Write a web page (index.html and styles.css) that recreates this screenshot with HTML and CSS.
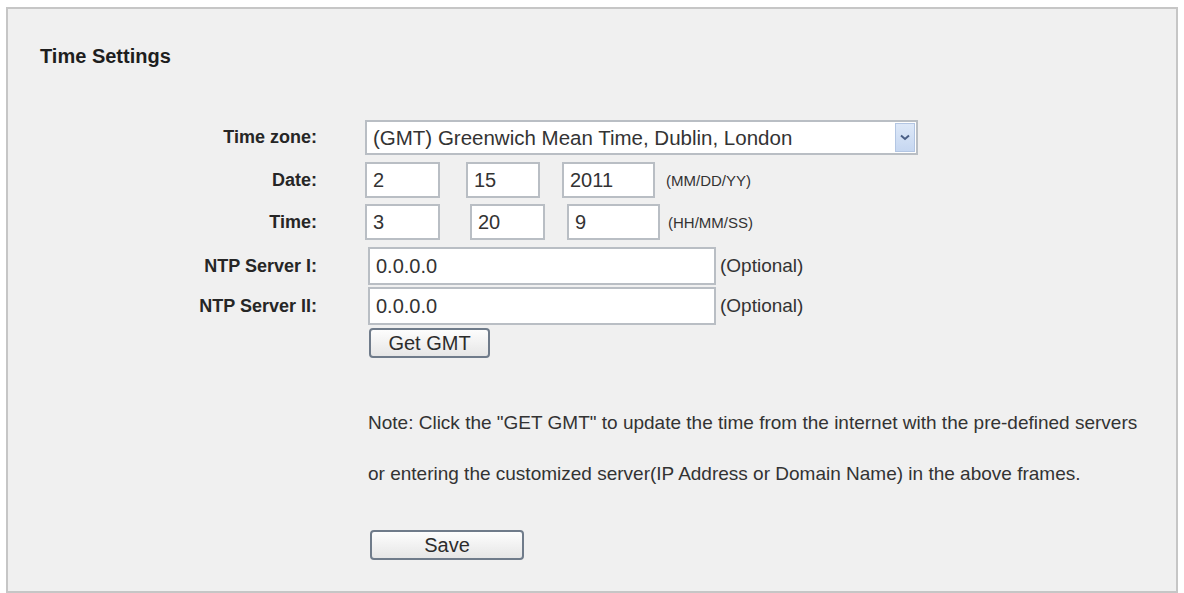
FILE: index.html
```html
<!DOCTYPE html>
<html lang="en">
<head>
  <meta charset="UTF-8" />
  <meta name="viewport" content="width=device-width, initial-scale=1" />
  <link rel="stylesheet" href="styles.css">
</head>
<body>
  <div class="panel">
    <h2 class="title">Time Settings</h2>

    <div class="form">
      <div class="row row-tz">
        <label class="label">Time zone:</label>
        <div class="field">
          <div class="select">
            <span class="select-text">(GMT) Greenwich Mean Time, Dublin, London</span>
            <span class="select-arrow">
              <svg width="10" height="7" viewBox="0 0 10 7"><path d="M1 1.5 L5 5 L9 1.5" fill="none" stroke="#4a5f86" stroke-width="2"/></svg>
            </span>
          </div>
        </div>
      </div>

      <div class="row row-date">
        <label class="label">Date:</label>
        <div class="field">
          <input class="box box-mm" type="text" value="2">
          <input class="box box-dd" type="text" value="15">
          <input class="box box-yy" type="text" value="2011">
          <span class="hint">(MM/DD/YY)</span>
        </div>
      </div>

      <div class="row row-time">
        <label class="label">Time:</label>
        <div class="field">
          <input class="box box-hh" type="text" value="3">
          <input class="box box-mi" type="text" value="20">
          <input class="box box-ss" type="text" value="9">
          <span class="hint">(HH/MM/SS)</span>
        </div>
      </div>

      <div class="row row-ntp1">
        <label class="label">NTP Server I:</label>
        <div class="field">
          <input class="box box-ntp" type="text" value="0.0.0.0">
          <span class="optional">(Optional)</span>
        </div>
      </div>

      <div class="row row-ntp2">
        <label class="label">NTP Server II:</label>
        <div class="field">
          <input class="box box-ntp" type="text" value="0.0.0.0">
          <span class="optional">(Optional)</span>
        </div>
      </div>

      <div class="row row-gmt">
        <span></span>
        <div class="field">
          <button class="btn btn-gmt" type="button">Get GMT</button>
        </div>
      </div>

      <div class="row row-note">
        <span></span>
        <p class="note">Note: Click the "GET GMT" to update the time from the internet with the pre-defined servers<br>or entering the customized server(IP Address or Domain Name) in the above frames.</p>
      </div>

      <div class="row row-save">
        <span></span>
        <div class="field">
          <button class="btn btn-save" type="button">Save</button>
        </div>
      </div>
    </div>
  </div>
</body>
</html>
```

FILE: styles.css
```css
html, body {
  margin: 0;
  padding: 0;
  background: #ffffff;
  font-family: "Liberation Sans", Arial, sans-serif;
  overflow: hidden;
}

.panel {
  margin: 7px 6px 0 6px;
  height: 586px;
  box-sizing: border-box;
  border: 2px solid #c6c6c6;
  background: #f0f0f0;
  padding: 35px 0 0 32px;
}

.title {
  margin: 0;
  font-size: 20px;
  line-height: 24px;
  font-weight: bold;
  color: #1e1e1e;
}

.form {
  margin-top: 52px;
  margin-left: -32px;
}

.row {
  display: grid;
  grid-template-columns: 309px 1fr;
  column-gap: 48px;
  align-items: center;
}

.label {
  text-align: right;
  font-size: 18px;
  font-weight: bold;
  color: #262626;
}

.field {
  display: flex;
  align-items: center;
}

.row-tz { height: 35px; }
.row-date { height: 36px; margin-top: 7px; }
.row-time { height: 36px; margin-top: 6px; }
.row-ntp1 { height: 38px; margin-top: 7px; }
.row-ntp2 { height: 38px; margin-top: 2px; }
.row-gmt { height: 30px; margin-top: 3px; }
.row-note { margin-top: 39px; }
.row-save { margin-top: 31px; }

.select {
  width: 553px;
  height: 35px;
  box-sizing: border-box;
  border: 2px solid #b9bec4;
  background: #ffffff;
  display: flex;
  align-items: center;
  padding: 0 1px 0 6px;
}

.select-text {
  flex: 1;
  font-size: 20.5px;
  color: #333;
}

.select-arrow {
  width: 20px;
  height: 29px;
  box-sizing: border-box;
  border: 1px solid #b3c6e3;
  background: linear-gradient(#dde8f8, #c6d7f1);
  display: flex;
  align-items: center;
  justify-content: center;
}

.box {
  height: 36px;
  box-sizing: border-box;
  border: 2px solid #b9bec4;
  background: #ffffff;
  font-family: "Liberation Sans", Arial, sans-serif;
  font-size: 20px;
  color: #333;
  padding: 0 6px;
  margin: 0;
  outline: none;
}

.box-mm { width: 75px; }
.box-dd { width: 74px; margin-left: 26px; }
.box-yy { width: 93px; margin-left: 22px; }
.box-hh { width: 75px; }
.box-mi { width: 75px; margin-left: 30px; }
.box-ss { width: 93px; margin-left: 22px; }

.box-ntp {
  width: 348px;
  height: 38px;
  margin-left: 3px;
}

.hint {
  font-size: 15px;
  color: #333;
  margin-left: 11px;
}

.row-time .hint { margin-left: 8px; }

.optional {
  font-size: 19px;
  color: #333;
  margin-left: 4px;
}

.btn {
  font-family: "Liberation Sans", Arial, sans-serif;
  font-size: 20px;
  color: #2c2c2c;
  border: 2px solid #6f7b8a;
  border-radius: 4px;
  background: linear-gradient(#fdfdfd, #e6e6e6);
  box-sizing: border-box;
  padding: 0;
  cursor: pointer;
}

.btn-gmt {
  width: 121px;
  height: 30px;
  margin-left: 4px;
}

.btn-save {
  width: 154px;
  height: 30px;
  margin-left: 5px;
}

.note {
  margin: 0;
  margin-left: 3px;
  font-size: 19px;
  line-height: 51px;
  color: #333;
}
```
